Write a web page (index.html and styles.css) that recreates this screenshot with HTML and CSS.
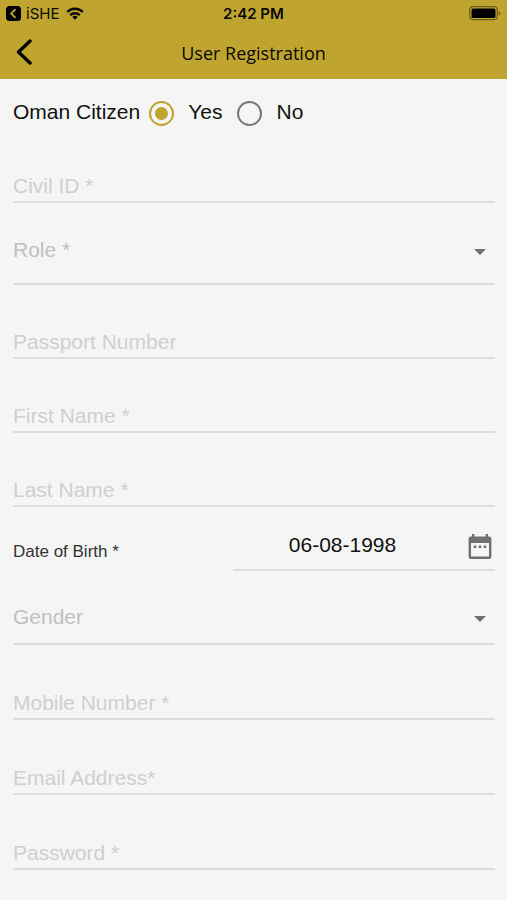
FILE: index.html
```html
<!DOCTYPE html>
<html lang="en">
<head>
<meta charset="utf-8">
<meta name="viewport" content="width=device-width, initial-scale=1">
<title>User Registration</title>
<link rel="stylesheet" href="styles.css">
</head>
<body>
<header class="top">
  <div class="status">
    <div class="status-left">
      <svg class="return-icon" viewBox="0 0 15 15" aria-hidden="true"><rect width="15" height="15" rx="3.5"/><path d="M9.5 3.2 5.2 7.5l4.3 4.3" fill="none" stroke="#bfa52f" stroke-width="1.8"/></svg>
      <span>iSHE</span>
      <svg class="wifi" viewBox="0 0 18 13" aria-hidden="true"><g fill="none" stroke="#0b0900" stroke-width="2.4"><path d="M1.2 5a11 11 0 0 1 15.6 0"/><path d="M4.2 8.2a6.8 6.8 0 0 1 9.6 0"/></g><path d="M6.3 10.1a3.8 3.8 0 0 1 5.4 0L9 12.8z"/></svg>
    </div>
    <time class="clock">2:42 PM</time>
    <svg class="battery" viewBox="0 0 32 15" aria-hidden="true"><rect x=".7" y=".7" width="27.6" height="13" rx="3.5" fill="none" stroke="#6d5d18" stroke-width="1.2"/><rect x="2.5" y="2.5" width="24" height="9.4" rx="1.5"/><path d="M29.7 5v4.5q1.6-.7 1.6-2.2T29.7 5z" fill="#6d5d18"/></svg>
  </div>
  <div class="nav">
    <button class="back" type="button" aria-label="Back"><svg viewBox="0 0 18 28" aria-hidden="true"><path d="M15 2 3.5 13 15 24" fill="none" stroke="#000" stroke-width="3.4" stroke-linecap="round" stroke-linejoin="round"/></svg></button>
    <h1>User Registration</h1>
  </div>
</header>
<main>
  <form class="form">
    <fieldset class="citizen">
      <legend class="legend">Oman Citizen</legend>
      <label class="choice"><input type="radio" name="citizen" value="yes" checked><span>Yes</span></label>
      <label class="choice"><input type="radio" name="citizen" value="no"><span>No</span></label>
    </fieldset>
    <input class="field" type="text" placeholder="Civil ID *" aria-label="Civil ID">
    <div class="pick pick-role">
      <select aria-label="Role"><option>Role *</option></select>
      <svg class="caret" viewBox="0 0 12 6" aria-hidden="true"><path d="M0 0h12L6 6z"/></svg>
    </div>
    <input class="field" type="text" placeholder="Passport Number" aria-label="Passport Number">
    <input class="field" type="text" placeholder="First Name *" aria-label="First Name">
    <input class="field" type="text" placeholder="Last Name *" aria-label="Last Name">
    <div class="birth">
      <label for="dob">Date of Birth *</label>
      <div class="date">
        <input id="dob" type="text" value="06-08-1998">
        <button type="button" aria-label="Open calendar"><svg viewBox="0 0 24 26" aria-hidden="true"><path fill-rule="evenodd" d="M4 0h2.400v2.500h11.200V0H20v2.500h1.200A2.200 2.200 0 0 1 23.400 4.700v18a2.200 2.200 0 0 1-2.200 2.200H2.800A2.200 2.200 0 0 1 .6 22.700v-18a2.200 2.200 0 0 1 2.200-2.200H4zM3 9v13.600h18V9z"/><path d="M5.700 11.600h2.500v2.500H5.700zm5 0h2.500v2.500h-2.500zm5 0h2.500v2.500h-2.500z"/></svg></button>
      </div>
    </div>
    <div class="pick pick-gender">
      <select aria-label="Gender"><option>Gender</option></select>
      <svg class="caret" viewBox="0 0 12 6" aria-hidden="true"><path d="M0 0h12L6 6z"/></svg>
    </div>
    <input class="field" type="tel" placeholder="Mobile Number *" aria-label="Mobile Number">
    <input class="field" type="email" placeholder="Email Address*" aria-label="Email Address">
    <input class="field" type="password" placeholder="Password *" aria-label="Password">
  </form>
</main>
</body>
</html>
```

FILE: styles.css
```css
* { box-sizing: border-box; }
body {
  margin: 0;
  background: #f5f5f5;
  color: #111;
  font-family: "Liberation Sans", Arial, sans-serif;
  font-size: 21px;
}
svg { display: block; }
button { padding: 0; border: 0; background: none; }
input, select { font: inherit; border-radius: 0; }

.top { background: #bfa52f; color: #0b0900; }
.status {
  display: grid;
  grid-template-columns: 1fr auto 1fr;
  align-items: center;
  height: 27px;
  padding: 0 6px;
  font: 15px/27px Inter, sans-serif;
}
.status-left { display: flex; align-items: center; gap: 5px; }
.return-icon { width: 15px; height: 15px; }
.wifi { width: 18px; height: 13px; margin-left: 2px; }
.clock { font-weight: 600; }
.battery { width: 32px; height: 15px; justify-self: end; }
.nav {
  display: grid;
  grid-template-columns: 48px 1fr 48px;
  align-items: center;
  height: 52px;
}
.back { justify-self: center; }
.back svg { width: 18px; height: 28px; }
h1 {
  margin: 0;
  font: 400 18px/24px "Open Sans", "Noto Sans", sans-serif;
  text-align: center;
}

.form { padding: 17px 12px 32px 13px; }
.citizen {
  display: flex;
  align-items: center;
  height: 32px;
  margin: 0 0 39px;
  padding: 0;
  border: 0;
}
.legend { float: left; padding: 0; margin-right: 9px; }
.choice { display: flex; align-items: center; gap: 14px; margin-right: 15px; }
.choice input {
  appearance: none;
  display: grid;
  place-items: center;
  width: 25px;
  height: 25px;
  margin: 2px 0 0;
  border: 2px solid #777;
  border-radius: 50%;
}
.choice input:checked { border-color: #bfa52f; }
.choice input:checked::before {
  content: "";
  width: 13px;
  height: 13px;
  border-radius: 50%;
  background: #bfa52f;
}

.field {
  display: block;
  width: 100%;
  height: 36px;
  margin: 0 0 38px;
  padding: 4px 0 0;
  border: 0;
  border-bottom: 2px solid #dcdcdc;
  background: transparent;
  outline: 0;
}
.field::placeholder { color: #cfcfd1; opacity: 1; }

.pick {
  display: grid;
  align-items: center;
  border-bottom: 2px solid #dcdcdc;
}
.pick select {
  grid-area: 1 / 1;
  appearance: none;
  width: 100%;
  height: 32px;
  padding: 0;
  border: 0;
  background: transparent;
  color: #bfbfc2;
}
.caret {
  grid-area: 1 / 1;
  justify-self: end;
  width: 12px;
  height: 6px;
  margin: 6px 9px 0 0;
  fill: #707070;
  pointer-events: none;
}
.birth {
  display: grid;
  grid-template-columns: 220px minmax(0, 1fr);
  align-items: center;
}
.birth label { padding-top: 12px; font-size: 17px; color: #333; }
.date {
  display: flex;
  align-items: center;
  height: 50px;
  border-bottom: 2px solid #dcdcdc;
}
.date input {
  flex: 1;
  min-width: 0;
  height: 32px;
  padding: 0 16px 0 0;
  border: 0;
  background: transparent;
  color: #111;
  text-align: center;
}
.date button { margin: 4px 3px 0 0; }
.date svg { width: 24px; height: 26px; fill: #707070; }

.citizen + .field { margin-top: 39px; }
.pick-role { margin: -24px 0 38px; padding: 16px 0 18px; }
.birth { margin-top: -24px; }
.pick-gender { margin-bottom: 39px; padding: 29px 0 11px; }
.pick-gender ~ .field { margin-bottom: 39px; }
```
